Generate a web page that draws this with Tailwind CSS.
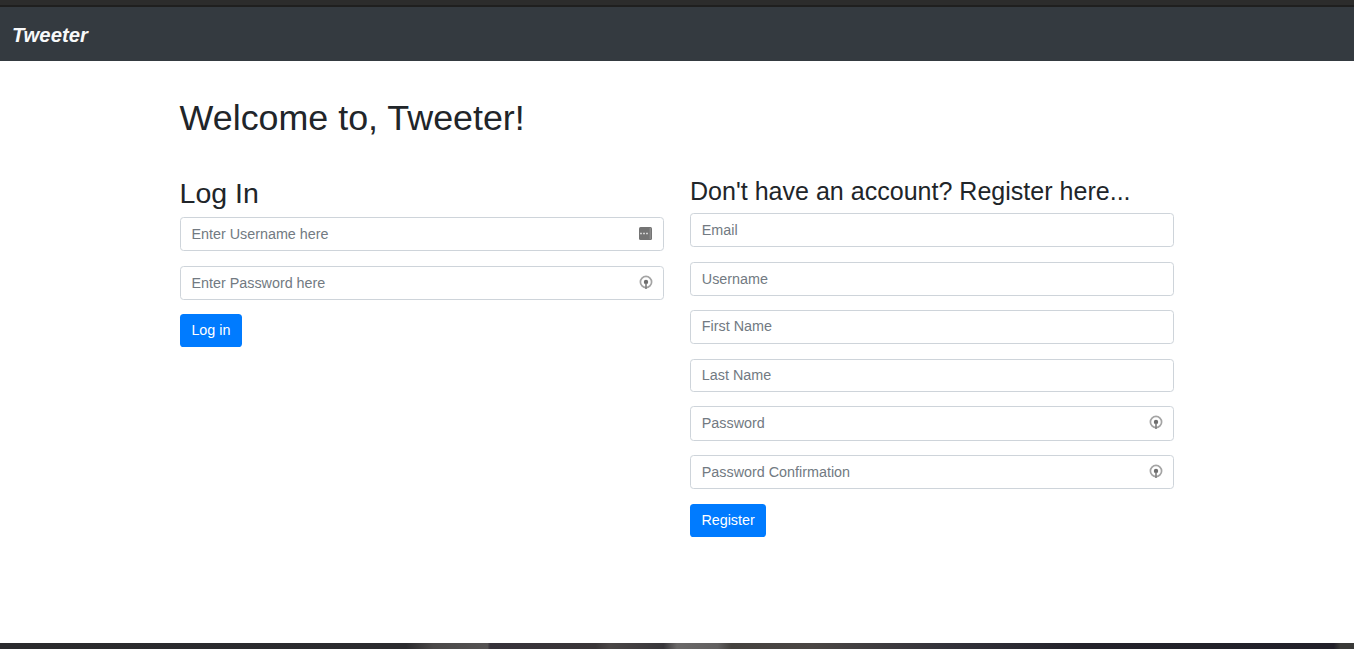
<!DOCTYPE html>
<html lang="en">
<head>
<meta charset="utf-8">
<title>Tweeter</title>
<script src="https://cdn.jsdelivr.net/npm/@tailwindcss/browser@4"></script>
</head>
<body class="m-0 h-[649px] overflow-hidden bg-white flex flex-col font-['Liberation_Sans',Arial,sans-serif] text-[#212529]">
  <div class="h-[7px] shrink-0 bg-[#2c2c2c] border-b-2 border-[#1f1f1f]"></div>
  <nav class="h-[54px] shrink-0 bg-[#343a40] flex items-center px-3">
    <a href="#" class="text-[20.25px] leading-none font-bold italic text-[#f8f9fa] pt-[1.5px]">Tweeter</a>
  </nav>
  <main class="flex-1 pl-[179.6px] pt-[35.8px]">
    <h1 class="text-[35.85px] leading-[1.2] mb-[36px]">Welcome to, Tweeter!</h1>
    <div class="flex gap-[26.4px]">
      <form class="w-[484px]">
        <h2 class="text-[28.5px] leading-[34px] mb-[7px]">Log In</h2>
        <div class="flex flex-col items-start">
          <div class="w-full h-[34px] mb-[15px] pt-[2px] border border-[#ced4da] rounded-[3.6px] px-[10.8px] flex items-center justify-between text-[14.35px] text-[#727a82]">
            <span>Enter Username here</span>
            <svg width="13" height="13" viewBox="0 0 13 13" class="mr-[-0.5px] mt-[-2px]"><rect x="0" y="0" width="13" height="13" rx="1.5" fill="#747474"/><path d="M1 6.5h9" stroke="#d0d0d0" stroke-width="1.5" stroke-dasharray="2 1"/><path d="M11.2 1v11" stroke="#969696"/></svg>
          </div>
          <div class="w-full h-[34px] mb-[14px] pt-[2px] border border-[#ced4da] rounded-[3.6px] px-[10.8px] flex items-center justify-between text-[14.35px] text-[#727a82]">
            <span>Enter Password here</span>
            <svg width="14" height="16" viewBox="0 0 14 16" class="mr-[-1px] mt-[-2px]"><circle cx="7" cy="7" r="5.6" fill="none" stroke="#a4a4a4" stroke-width="1.7"/><circle cx="7" cy="7" r="2.2" fill="#6e6e6e"/><path d="M6.2 8h1.6v6H6.2z" fill="#808080"/></svg>
          </div>
          <button type="button" class="h-[33px] px-[11.8px] rounded-[3.6px] bg-[#007bff] text-white text-[14.35px]">Log in</button>
        </div>
      </form>
      <form class="w-[484px]">
        <h3 class="text-[25.05px] leading-[30px] mb-[7px]">Don't have an account? Register here...</h3>
        <div class="flex flex-col items-start">
          <div class="w-full h-[34px] mb-[15px] pt-[2px] border border-[#ced4da] rounded-[3.6px] px-[10.8px] flex items-center text-[14.35px] text-[#727a82]">Email</div>
          <div class="w-full h-[34px] mb-[14px] pt-[2px] border border-[#ced4da] rounded-[3.6px] px-[10.8px] flex items-center text-[14.35px] text-[#727a82]">Username</div>
          <div class="w-full h-[34px] mb-[15px] border border-[#ced4da] rounded-[3.6px] px-[10.8px] flex items-center text-[14.35px] text-[#727a82]">First Name</div>
          <div class="w-full h-[33px] mb-[14px] border border-[#ced4da] rounded-[3.6px] px-[10.8px] flex items-center text-[14.35px] text-[#727a82]">Last Name</div>
          <div class="w-full h-[35px] mb-[14px] border border-[#ced4da] rounded-[3.6px] px-[10.8px] flex items-center justify-between text-[14.35px] text-[#727a82]">
            <span>Password</span>
            <svg width="14" height="16" viewBox="0 0 14 16" class="mr-[-1px]"><circle cx="7" cy="7" r="5.6" fill="none" stroke="#a4a4a4" stroke-width="1.7"/><circle cx="7" cy="7" r="2.2" fill="#6e6e6e"/><path d="M6.2 8h1.6v6H6.2z" fill="#808080"/></svg>
          </div>
          <div class="w-full h-[34px] mb-[15px] pt-[2px] border border-[#ced4da] rounded-[3.6px] px-[10.8px] flex items-center justify-between text-[14.35px] text-[#727a82]">
            <span>Password Confirmation</span>
            <svg width="14" height="16" viewBox="0 0 14 16" class="mr-[-1px] mt-[-2px]"><circle cx="7" cy="7" r="5.6" fill="none" stroke="#a4a4a4" stroke-width="1.7"/><circle cx="7" cy="7" r="2.2" fill="#6e6e6e"/><path d="M6.2 8h1.6v6H6.2z" fill="#808080"/></svg>
          </div>
          <button type="button" class="h-[33px] px-[11.4px] rounded-[3.6px] bg-[#007bff] text-white text-[14.35px]">Register</button>
        </div>
      </form>
    </div>
  </main>
  <div class="h-[6px] shrink-0 bg-[linear-gradient(90deg,#2a2a2d_0%,#2b2b2e_30%,#4a4848_32%,#555353_36%,#36323a_36.2%,#3a3638_44%,#4a4646_45%,#38363a_49%,#6a6868_50%,#626060_53%,#45423f_54%,#4a4644_60%,#33323a_70%,#23222a_80%,#212029_98.5%,#3a3a38_99%,#3a3a38_100%)]"></div>
</body>
</html>
